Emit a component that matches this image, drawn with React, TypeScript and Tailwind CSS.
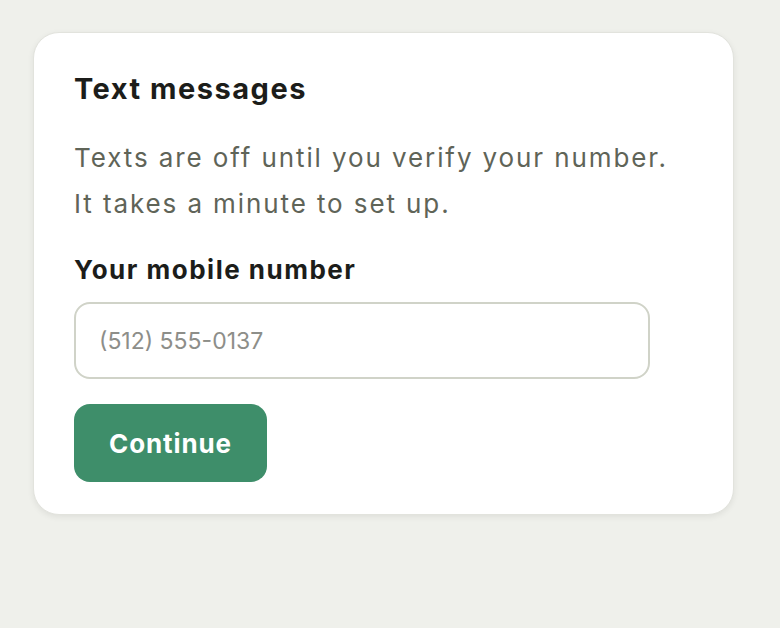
import React from 'react';

const App: React.FC = () => {
  return (
    <div className="min-h-screen w-full bg-[#eff0eb] pt-[32px] pl-[33px] font-[Inter,'Noto_Sans',sans-serif]">
      <div className="flex w-[701px] flex-col items-start rounded-[26px] border border-[#e2e3dd] bg-white pt-[38px] pb-[32px] px-[40px] shadow-[0_2px_6px_rgba(0,0,0,0.07)]">
        <h2 className="text-[29px] leading-[36px] font-bold tracking-[1.5px] text-[#1c1d1a]">Text messages</h2>
        <p className="mt-[28px] text-[26px] leading-[46px] tracking-[1.9px] text-[#5f6458]">
          Texts are off until you verify your number.
          <br />
          It takes a minute to set up.
        </p>
        <label className="mt-[27px] block text-[26px] leading-[32px] font-bold tracking-[1.5px] text-[#1c1d1a]">
          Your mobile number
        </label>
        <input
          type="tel"
          placeholder="(512) 555-0137"
          className="mt-[16px] block h-[77px] w-[576px] rounded-[16px] border-2 border-[#d0d3c8] bg-white px-[23px] text-[23px] text-[#1c1d1a] placeholder:text-[#8d8e89] outline-none"
        />
        <button className="mt-[25px] flex h-[78px] items-center rounded-[16px] bg-[#3e8e6a] px-[35px] text-[26px] font-bold tracking-[0.9px] text-white">
          Continue
        </button>
      </div>
    </div>
  );
};

export default App;
